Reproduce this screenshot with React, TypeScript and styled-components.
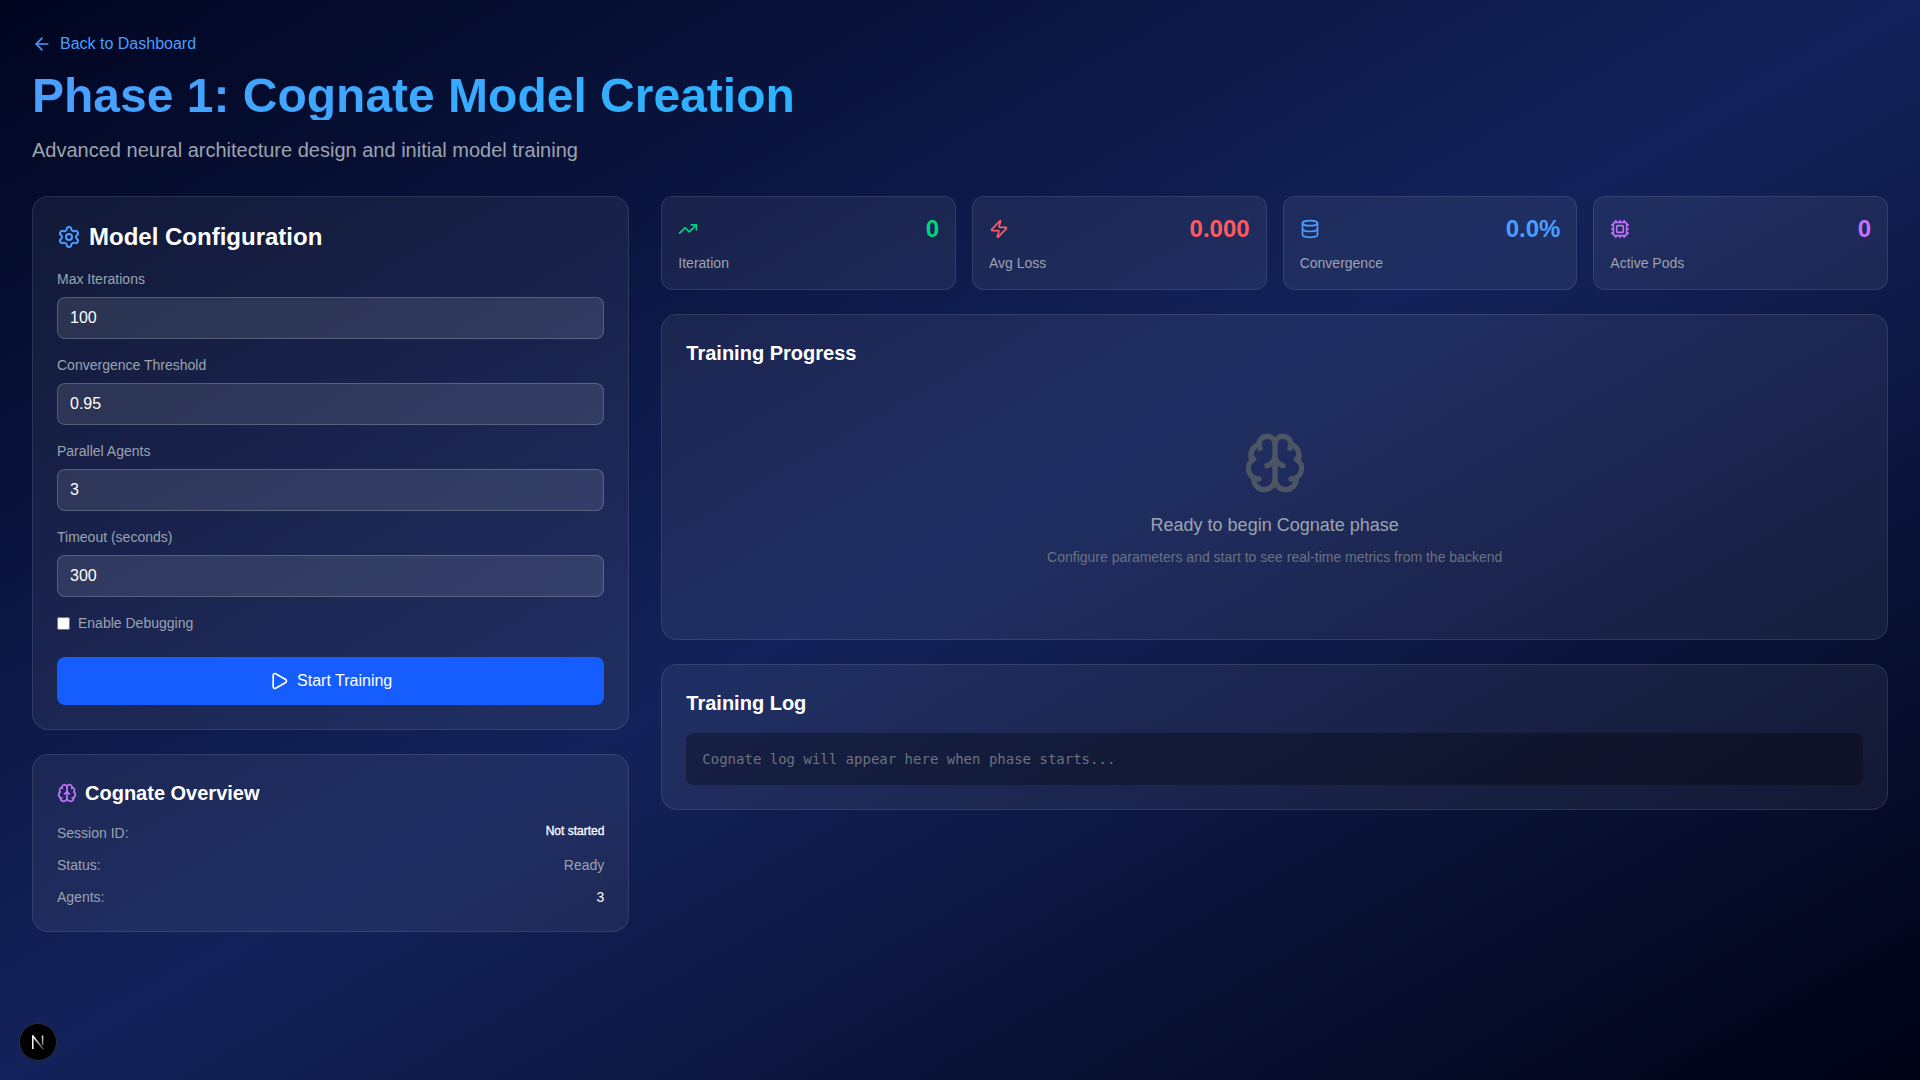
import styled, { createGlobalStyle } from 'styled-components';
import { ArrowLeft, Brain, Cpu, Database, Play, Settings, TrendingUp, Zap } from 'lucide-react';

const GlobalStyle = createGlobalStyle`
  * { box-sizing: border-box; }
  body {
    margin: 0;
    font-family: "Liberation Sans", Arial, sans-serif;
    color: #fff;
  }
`

const Page = styled.div`
  min-height: 100vh;
  padding: 32px;
  background: linear-gradient(to bottom right, #000520, #13225a 50%, #000214);
`
const BackLink = styled.a`
  display: flex;
  align-items: center;
  gap: 8px;
  height: 24px;
  color: #4a9eff;
  font-size: 16px;
  text-decoration: none;
`
const Title = styled.h1`
  margin: 16px 0;
  font-size: 48px;
  line-height: 48px;
  font-weight: 700;
  color: transparent;
  background: linear-gradient(to right, #4a9eff, #00d4ff);
  background-clip: text;
  -webkit-background-clip: text;
`
const Subtitle = styled.p`
  margin: 0 0 32px;
  font-size: 20px;
  line-height: 28px;
  color: #9ca3af;
`
const Layout = styled.div`
  display: grid;
  grid-template-columns: repeat(3, minmax(0, 1fr));
  gap: 32px;
`
const Column = styled.div<{ $wide?: boolean }>`
  display: flex;
  flex-direction: column;
  gap: 24px;
  grid-column: ${p => (p.$wide ? 'span 2' : 'span 1')};
`
const Card = styled.section`
  padding: 24px;
  border: 1px solid rgba(255, 255, 255, 0.1);
  border-radius: 16px;
  background: rgba(255, 255, 255, 0.06);
`
const CardTitle = styled.h2<{ $large?: boolean }>`
  display: flex;
  align-items: center;
  gap: 8px;
  margin: 0 0 16px;
  font-size: ${p => (p.$large ? '24px' : '20px')};
  line-height: ${p => (p.$large ? '32px' : '28px')};
  font-weight: 700;
  color: #fff;
`
const Field = styled.div`
  margin-bottom: 16px;
`
const FieldLabel = styled.label`
  display: block;
  margin-bottom: 8px;
  font-size: 14px;
  line-height: 20px;
  color: #9ca3af;
`
const Input = styled.input`
  display: block;
  width: 100%;
  padding: 8px 12px;
  font: inherit;
  font-size: 16px;
  line-height: 24px;
  color: #fff;
  background: rgba(255, 255, 255, 0.1);
  border: 1px solid rgba(255, 255, 255, 0.2);
  border-radius: 8px;
  outline: none;
`
const CheckRow = styled.label`
  display: flex;
  align-items: center;
  gap: 8px;
  font-size: 14px;
  line-height: 20px;
  color: #9ca3af;
  input { margin: 0; }
`
const StartButton = styled.button`
  display: flex;
  align-items: center;
  justify-content: center;
  gap: 8px;
  width: 100%;
  height: 48px;
  margin-top: 24px;
  font: inherit;
  font-size: 16px;
  color: #fff;
  background: #165dff;
  border: 0;
  border-radius: 8px;
`
const Rows = styled.div`
  display: flex;
  flex-direction: column;
  gap: 12px;
`
const Row = styled.div`
  display: flex;
  justify-content: space-between;
  font-size: 14px;
  line-height: 20px;
  color: #9ca3af;
`
const RowValue = styled.span<{ $muted?: boolean }>`
  color: ${p => (p.$muted ? '#9ca3af' : '#fff')};
`
const SessionValue = styled.span`
  font-size: 12px;
  line-height: 16px;
  color: #fff;
  -webkit-text-stroke: 0.3px #fff;
`
const StatGrid = styled.div`
  display: grid;
  grid-template-columns: repeat(4, minmax(0, 1fr));
  gap: 16px;
`
const StatCard = styled.div`
  padding: 16px;
  border: 1px solid rgba(255, 255, 255, 0.1);
  border-radius: 12px;
  background: rgba(255, 255, 255, 0.06);
`
const StatTop = styled.div<{ $tone: string }>`
  display: flex;
  align-items: center;
  justify-content: space-between;
  margin-bottom: 8px;
  color: ${p => p.$tone};
`
const StatValue = styled.span`
  font-size: 24px;
  line-height: 32px;
  font-weight: 700;
`
const StatLabel = styled.div`
  font-size: 14px;
  line-height: 20px;
  color: #9ca3af;
`
const EmptyState = styled.div`
  display: flex;
  flex-direction: column;
  align-items: center;
  padding: 48px 0;
  text-align: center;
  svg { color: #4b5563; margin-bottom: 16px; }
`
const EmptyTitle = styled.p`
  margin: 0 0 8px;
  font-size: 18px;
  line-height: 28px;
  color: #9ca3af;
`
const EmptyHint = styled.p`
  margin: 0;
  font-size: 14px;
  line-height: 20px;
  color: #6b7280;
`
const LogBox = styled.div`
  padding: 16px;
  border-radius: 8px;
  background: rgba(0, 0, 0, 0.3);
  font-family: "DejaVu Sans Mono", monospace;
  font-size: 14px;
  line-height: 20px;
  color: #6b7280;
`
const DevBadge = styled.div`
  position: fixed;
  left: 19px;
  bottom: 19px;
  display: flex;
  align-items: center;
  justify-content: center;
  width: 38px;
  height: 38px;
  border: 1px solid #2a2f3f;
  border-radius: 50%;
  background: #000;
`

const configFields = [
  { label: 'Max Iterations', value: '100' },
  { label: 'Convergence Threshold', value: '0.95' },
  { label: 'Parallel Agents', value: '3' },
  { label: 'Timeout (seconds)', value: '300' },
];

const stats = [
  { label: 'Iteration', value: '0', tone: '#00d67f', Icon: TrendingUp },
  { label: 'Avg Loss', value: '0.000', tone: '#ff5a5f', Icon: Zap },
  { label: 'Convergence', value: '0.0%', tone: '#4a9eff', Icon: Database },
  { label: 'Active Pods', value: '0', tone: '#c471ff', Icon: Cpu },
];

function App() {
  return (
    <Page>
      <GlobalStyle />
      <BackLink href="#">
        <ArrowLeft size={20} />
        Back to Dashboard
      </BackLink>
      <Title>Phase 1: Cognate Model Creation</Title>
      <Subtitle>Advanced neural architecture design and initial model training</Subtitle>

      <Layout>
        <Column>
          <Card>
            <CardTitle $large>
              <Settings size={24} color="#4a9eff" />
              Model Configuration
            </CardTitle>
            {configFields.map(field => (
              <Field key={field.label}>
                <FieldLabel>{field.label}</FieldLabel>
                <Input type="number" defaultValue={field.value} />
              </Field>
            ))}
            <CheckRow>
              <input type="checkbox" />
              Enable Debugging
            </CheckRow>
            <StartButton>
              <Play size={20} />
              Start Training
            </StartButton>
          </Card>

          <Card>
            <CardTitle>
              <Brain size={20} color="#c471ff" />
              Cognate Overview
            </CardTitle>
            <Rows>
              <Row>
                <span>Session ID:</span>
                <SessionValue>Not started</SessionValue>
              </Row>
              <Row>
                <span>Status:</span>
                <RowValue $muted>Ready</RowValue>
              </Row>
              <Row>
                <span>Agents:</span>
                <RowValue>3</RowValue>
              </Row>
            </Rows>
          </Card>
        </Column>

        <Column $wide>
          <StatGrid>
            {stats.map(({ label, value, tone, Icon }) => (
              <StatCard key={label}>
                <StatTop $tone={tone}>
                  <Icon size={20} />
                  <StatValue>{value}</StatValue>
                </StatTop>
                <StatLabel>{label}</StatLabel>
              </StatCard>
            ))}
          </StatGrid>

          <Card>
            <CardTitle>Training Progress</CardTitle>
            <EmptyState>
              <Brain size={64} />
              <EmptyTitle>Ready to begin Cognate phase</EmptyTitle>
              <EmptyHint>Configure parameters and start to see real-time metrics from the backend</EmptyHint>
            </EmptyState>
          </Card>

          <Card>
            <CardTitle>Training Log</CardTitle>
            <LogBox>Cognate log will appear here when phase starts...</LogBox>
          </Card>
        </Column>
      </Layout>

      <DevBadge>
        <svg width="18" height="18" viewBox="0 0 18 18" fill="none">
          <defs>
            <linearGradient id="nextFade" x1="7" y1="4" x2="14" y2="16" gradientUnits="userSpaceOnUse">
              <stop offset="0" stopColor="#fff" />
              <stop offset="1" stopColor="#fff" stopOpacity="0.25" />
            </linearGradient>
          </defs>
          <path d="M3.8 16V2.5" stroke="#fff" strokeWidth="1.5" />
          <path d="M3.4 2.5L14.5 16.5" stroke="url(#nextFade)" strokeWidth="1.5" />
          <path d="M13.6 2.5V12" stroke="url(#nextFade)" strokeWidth="1.5" />
        </svg>
      </DevBadge>
    </Page>
  )
}

export default App;
